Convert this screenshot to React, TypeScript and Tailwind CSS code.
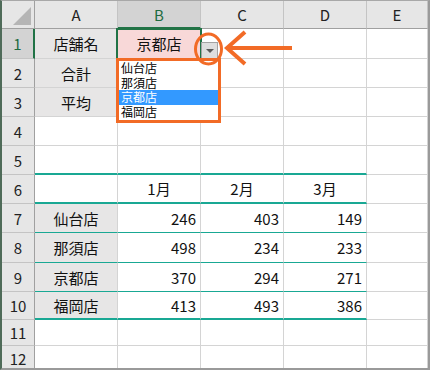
import React from "react";

const COLS = ["A", "B", "C", "D", "E"];
const ROW_H = [30, 29, 29, 29, 29, 29, 29, 30, 29, 28, 26, 26];

type Cell = { text?: string; align?: "c" | "r"; gray?: boolean; pink?: boolean };

const data: Record<number, Cell[]> = {
  1: [{ text: "店舗名", align: "c", gray: true }, { text: "京都店", align: "c", pink: true }],
  2: [{ text: "合計", align: "c", gray: true }],
  3: [{ text: "平均", align: "c", gray: true }],
  6: [{}, { text: "1月", align: "c" }, { text: "2月", align: "c" }, { text: "3月", align: "c" }],
  7: [{ text: "仙台店", align: "c", gray: true }, { text: "246", align: "r" }, { text: "403", align: "r" }, { text: "149", align: "r" }],
  8: [{ text: "那須店", align: "c", gray: true }, { text: "498", align: "r" }, { text: "234", align: "r" }, { text: "233", align: "r" }],
  9: [{ text: "京都店", align: "c", gray: true }, { text: "370", align: "r" }, { text: "294", align: "r" }, { text: "271", align: "r" }],
  10: [{ text: "福岡店", align: "c", gray: true }, { text: "413", align: "r" }, { text: "493", align: "r" }, { text: "386", align: "r" }],
};

const stores = ["仙台店", "那須店", "京都店", "福岡店"];

function bottomBorder(row: number, col: number) {
  if (col > 3) return "border-b border-b-[#d4d4d4]";
  if (row === 5 || row === 6 || row === 10) return "border-b-2 border-b-[#19a894]";
  if (row >= 7 && row <= 9) return "border-b border-b-[#19a894]";
  return "border-b border-b-[#d4d4d4]";
}

export default function App() {
  return (
    <div
      className="relative w-[430px] h-[370px] overflow-hidden bg-white border-t border-t-[#a8a8a8] border-l-2 border-l-[#4f6b59] border-r-2 border-r-[#9a9a9a] border-b-2 border-b-[#9a9a9a]"
      style={{ fontFamily: '"Noto Sans CJK JP", "Noto Sans", sans-serif' }}
    >
      <div className="grid grid-cols-[33px_83px_83px_83px_83px_1fr] text-[15px] text-[#111]">
        {/* header row */}
        <div className="relative h-[28px] bg-[#e6e6e6] border-r border-r-[#a0a0a0] border-b border-b-[#a0a0a0]">
          <div className="absolute right-[3px] bottom-[3px] w-0 h-0 border-l-[18px] border-l-transparent border-b-[18px] border-b-[#b5b5b5]" />
        </div>
        {COLS.map((c) => (
          <div
            key={c}
            className={
              c === "B"
                ? "h-[28px] flex items-center justify-center bg-[#d3d3d3] text-[#1e6b3f] border-r border-r-[#c4c4c4] border-b-2 border-b-[#217346]"
                : "h-[28px] flex items-center justify-center bg-[#e6e6e6] text-[#222] border-r border-r-[#c4c4c4] border-b border-b-[#a0a0a0]"
            }
          >
            <span className="leading-none">{c}</span>
          </div>
        ))}

        {ROW_H.map((h, i) => {
          const row = i + 1;
          const cells = data[row] || [];
          return (
            <React.Fragment key={row}>
              <div
                style={{ height: h }}
                className={
                  row === 1
                    ? "flex items-center justify-center bg-[#d3d3d3] text-[#1e6b3f] border-b border-b-[#c4c4c4] border-r-2 border-r-[#217346]"
                    : "flex items-center justify-center bg-[#e6e6e6] text-[#222] border-b border-b-[#c4c4c4] border-r border-r-[#a0a0a0]"
                }
              >
                <span className="leading-none">{row}</span>
              </div>
              {COLS.map((c, ci) => {
                const cell = cells[ci] || {};
                const bg = cell.pink ? "bg-[#f8d8d8]" : cell.gray ? "bg-[#e7e6e6]" : "bg-white";
                const al = cell.align === "r" ? "justify-end pr-[4px]" : "justify-center";
                return (
                  <div
                    key={c}
                    style={{ height: h }}
                    className={`flex items-center ${al} ${bg} border-r border-r-[#d4d4d4] ${bottomBorder(row, ci)}`}
                  >
                    {cell.text && <span className="leading-none">{cell.text}</span>}
                  </div>
                );
              })}
            </React.Fragment>
          );
        })}
      </div>

      {/* active cell outline */}
      <div className="absolute left-[114px] top-[27px] w-[86px] h-[32px] border-2 border-[#217346]" />

      {/* dropdown button */}
      <div className="absolute left-[199px] top-[41px] w-[17px] h-[17px] bg-[#dedede] border border-[#a3a3a3] flex items-center justify-center">
        <div className="w-0 h-0 border-l-[4px] border-r-[4px] border-t-[4px] border-l-transparent border-r-transparent border-t-[#5a5a5a]" />
      </div>

      {/* dropdown list */}
      <div className="absolute left-[114px] top-[57px] w-[105px] h-[65px] bg-white border-[3px] border-[#f26b26] text-[12px] text-black">
        {stores.map((s) => (
          <div
            key={s}
            className={
              s === "京都店"
                ? "h-[14.5px] leading-[14.5px] pl-[2px] overflow-hidden bg-[#3399ff] text-white"
                : "h-[14.5px] leading-[14.5px] pl-[2px] overflow-hidden"
            }
          >
            {s}
          </div>
        ))}
      </div>

      {/* annotation: circle and arrow */}
      <svg className="absolute left-[-2px] top-[-1px] pointer-events-none" width="430" height="370">
        <ellipse cx="208.5" cy="49" rx="13" ry="15" fill="none" stroke="#f26b26" strokeWidth="3" />
        <line x1="228" y1="48" x2="292" y2="48" stroke="#f26b26" strokeWidth="4" />
        <polyline points="245,32 227,48 245,64" fill="none" stroke="#f26b26" strokeWidth="4" strokeLinejoin="miter" />
      </svg>
    </div>
  );
}
